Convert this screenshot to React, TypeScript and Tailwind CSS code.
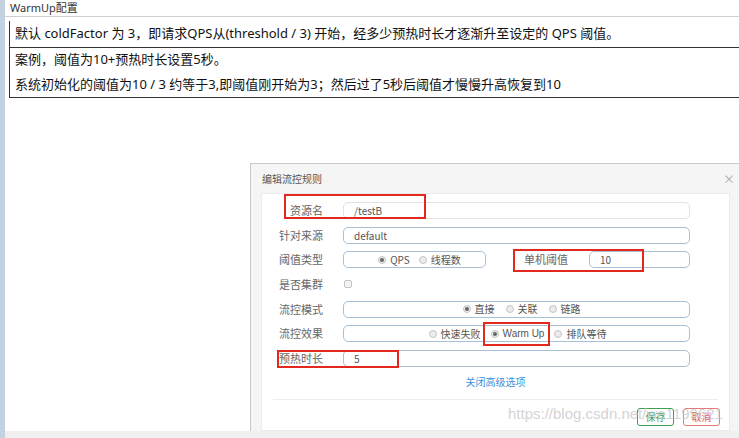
import React from "react";

function Radio({ label, checked }: { label: string; checked?: boolean }) {
  return (
    <div className="flex items-center gap-[4px]">
      <div className="w-[8px] h-[8px] rounded-full border border-[#c4c4c4] bg-[#ececec] flex items-center justify-center">
        {checked ? <div className="w-[4px] h-[4px] rounded-full bg-[#666]" /> : null}
      </div>
      <span className="text-[10px] text-[#555] leading-none">{label}</span>
    </div>
  );
}

function Row({ label, children }: { label: string; children: React.ReactNode }) {
  return (
    <div className="flex items-center h-[24.7px]">
      <div className="w-[61px] text-right text-[11px] text-[#666] leading-none">{label}</div>
      <div className="ml-[20px] flex items-center">{children}</div>
    </div>
  );
}

const inputCls =
  "h-[17px] rounded-[5px] border border-[#a9c1d6] bg-white flex items-center pl-[10px] text-[10px] text-[#555]";

export default function App() {
  return (
    <div className="w-[739px] h-[438px] flex bg-white overflow-hidden relative font-['Noto_Sans','Noto_Sans_CJK_SC',sans-serif]">
      <div className="w-[5px] shrink-0 bg-[#c2d2e0]" />
      <div className="flex-1 flex flex-col min-w-0">
        <div className="h-[16px] pl-[5px] text-[11px] leading-[16px] text-[#333]">WarmUp配置</div>
        <div className="h-px bg-[#cfcfcf]" />
        <div className="mt-[4px] ml-[4px] border-l border-b border-[#333] text-[13px] text-[#111]">
          <div className="h-[27px] flex items-center pl-[5px] border-b border-[#333]">
            默认 coldFactor 为 3，即请求QPS从(threshold / 3) 开始，经多少预热时长才逐渐升至设定的 QPS 阈值。
          </div>
          <div className="h-[24px] flex items-center pl-[5px]">案例，阈值为10+预热时长设置5秒。</div>
          <div className="h-[25px] flex items-center pl-[5px]">
            系统初始化的阈值为10 / 3 约等于3,即阈值刚开始为3；然后过了5秒后阈值才慢慢升高恢复到10
          </div>
        </div>
        <div className="flex-1 flex flex-col min-h-0">
          <div className="mt-[65px] ml-[245px] w-[500px] flex-1 border-l border-t border-[#c8c8c8] bg-[#f5f5f5] flex flex-col font-['Noto_Sans_CJK_SC',sans-serif]">
            <div className="h-[29px] shrink-0 flex items-center justify-between pl-[11px] pr-[15px]">
              <span className="text-[10px] text-[#555]">编辑流控规则</span>
              <span className="text-[12px] text-[#aaa] leading-none">×</span>
            </div>
            <div className="ml-[10px] w-[469px] flex-1 bg-white border border-[#ececec] pt-[4px] flex flex-col">
              <Row label="资源名">
                <div className={inputCls + " w-[347px] bg-[#eeeeee] border-[#e2e2e2]"}>/testB</div>
              </Row>
              <Row label="针对来源">
                <div className={inputCls + " w-[347px]"}>default</div>
              </Row>
              <Row label="阈值类型">
                <div className={inputCls + " w-[143px] justify-center pl-0 gap-[9px]"}>
                  <Radio label="QPS" checked />
                  <Radio label="线程数" />
                </div>
                <div className="ml-[38px] w-[65px] text-[11px] text-[#666] leading-none">单机阈值</div>
                <div className={inputCls + " w-[101px]"}>10</div>
              </Row>
              <Row label="是否集群">
                <div className="ml-[1px] w-[8px] h-[8px] rounded-[2px] border border-[#c4c4c4] bg-[#f4f4f4]" />
              </Row>
              <Row label="流控模式">
                <div className={inputCls + " w-[347px] justify-center pl-0 gap-[11px]"}>
                  <Radio label="直接" checked />
                  <Radio label="关联" />
                  <Radio label="链路" />
                </div>
              </Row>
              <Row label="流控效果">
                <div className={inputCls + " w-[347px] justify-center pl-0 pr-[8px] gap-[10px]"}>
                  <Radio label="快速失败" />
                  <div className="flex items-center gap-[4px]">
                    <div className="w-[8px] h-[8px] rounded-full border border-[#c4c4c4] bg-[#ececec] flex items-center justify-center">
                      <div className="w-[4px] h-[4px] rounded-full bg-[#666]" />
                    </div>
                    <span className="text-[10px] text-[#555] leading-none font-['Liberation_Sans',sans-serif]">Warm Up</span>
                  </div>
                  <Radio label="排队等待" />
                </div>
              </Row>
              <Row label="预热时长">
                <div className={inputCls + " w-[347px]"}>5</div>
              </Row>
              <div className="h-[22px] flex items-center justify-center text-[10px] text-[#3d8fd8]">关闭高级选项</div>
              <div className="mt-[6px] mx-[11px] h-px bg-[#ececec]" />
              <div className="mt-[8px] flex justify-end gap-[9px] pr-[9px]">
                <div className="w-[37px] h-[18px] rounded-[3px] border border-[#3f9e52] text-[#3f9e52] text-[10px] flex items-center justify-center">保存</div>
                <div className="w-[37px] h-[18px] rounded-[3px] border border-[#e47a7a] text-[#e05a5a] text-[10px] flex items-center justify-center">取消</div>
              </div>
            </div>
          </div>
        </div>
        <div className="h-[7px] shrink-0 bg-[#efefef]" />
      </div>

      {/* red annotation boxes */}
      <div className="absolute left-[284px] top-[194px] w-[142px] h-[25px] border-2 border-[#e3281e]" />
      <div className="absolute left-[513px] top-[249px] w-[131px] h-[23px] border-2 border-[#e3281e]" />
      <div className="absolute left-[483px] top-[322px] w-[67px] h-[24px] border-2 border-[#e3281e]" />
      <div className="absolute left-[277px] top-[350px] w-[122px] h-[18px] border-2 border-[#e3281e]" />

      {/* watermark */}
      <div className="absolute left-[508px] top-[406px] text-[15px] leading-none text-[#c8c8c8]/80 font-['Liberation_Sans',sans-serif] whitespace-nowrap">
        https://blog.csdn.net/we1199621
      </div>
    </div>
  );
}
